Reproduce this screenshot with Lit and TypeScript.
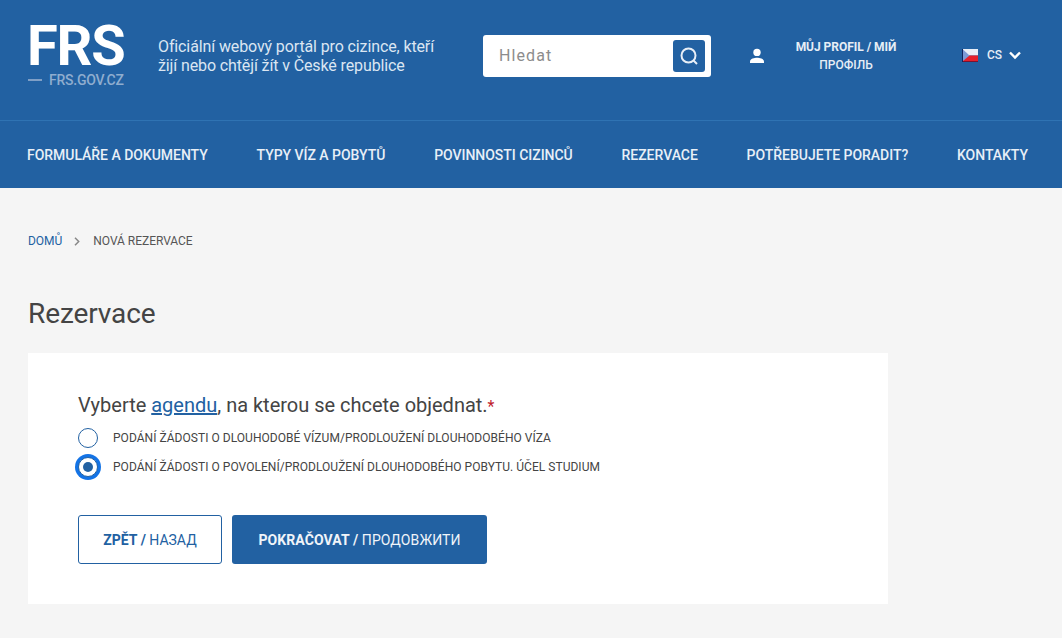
import { LitElement, html, css } from "lit";
import { customElement } from "lit/decorators.js";

@customElement("app-root")
export class AppRoot extends LitElement {
  static styles = css`
    :host { display: block; height: 638px; overflow: hidden; background: #f5f5f5; font-family: Roboto, "Liberation Sans", sans-serif; color: #3c3c3c; }
    .hdr { background: #2261a2; height: 188px; box-sizing: border-box; }
    .top { height: 121px; box-sizing: border-box; border-bottom: 1px solid #2f73b3; display: flex; align-items: flex-start; padding: 0 28px; }
    .logo { width: 97px; margin-top: 26px; flex: none; }
    .frs { font-size: 56px; line-height: 40px; height: 41px; font-weight: 700; color: #fff; letter-spacing: -1.2px; margin-left: -1px; }
    .dom { display: flex; align-items: center; gap: 7px; font-size: 14px; line-height: 16px; color: #8fadcf; margin-top: 5px; font-weight: 500; letter-spacing: -0.22px; }
    .dash { width: 14px; height: 2px; background: #7f9fc6; }
    .slogan { margin: 37px 0 0 33px; width: 300px; font-size: 16px; line-height: 19px; color: #dbe6f2; flex: none; padding-right: 10px; box-sizing: border-box; letter-spacing: -0.12px; }
    .search { margin: 35px 0 0 25px; width: 228px; height: 42px; box-sizing: border-box; background: #fff; border-radius: 3px; display: flex; align-items: center; justify-content: space-between; padding: 0 6px 0 16px; flex: none; }
    .ph { font-size: 16px; letter-spacing: 1.1px; color: #8c8c8c; margin-bottom: 2px; }
    .sbtn { width: 32px; height: 32px; background: #2261a2; border-radius: 3px; display: flex; align-items: center; justify-content: center; }
    .user { margin: 48px 0 0 38px; flex: none; display: block; }
    .prof { margin: 38px 0 0 26px; width: 110px; text-align: center; font-size: 12px; line-height: 18px; color: #e6eef6; flex: none; font-weight: 500; letter-spacing: -0.03px; }
    .prof b { font-weight: 700; display: block; }
    .lang { margin: 48px 0 0 61px; display: flex; align-items: center; flex: none; font-size: 12px; font-weight: 500; color: #e6eef6; }
    .lang svg.flag { margin-right: 9px; }
    .lang svg.chev { margin-left: 7px; }
    .nav { height: 67px; display: flex; justify-content: space-between; align-items: center; padding: 0 34px 4px 27px; font-size: 14px; font-weight: 500; color: #e8eff7; letter-spacing: -0.03px; }
    .crumbs { display: flex; align-items: center; padding: 46px 0 0 28px; font-size: 12px; line-height: 14px; color: #555; letter-spacing: -0.03px; }
    .crumbs a { color: #2261a2; }
    .crumbs svg { margin: 0 13px 0 12px; }
    h1 { font-size: 28px; line-height: 32px; font-weight: 400; margin: 50px 0 0 28px; color: #444; letter-spacing: -0.1px; }
    .card { margin: 23px 0 0 28px; width: 860px; height: 251px; box-sizing: border-box; background: #fff; padding: 40px 50px 0; }
    .q { font-size: 20px; line-height: 24px; color: #444; letter-spacing: -0.01px; }
    .q a { color: #2261a2; text-decoration: underline; }
    .q i { color: #c0202c; font-style: normal; font-size: 16px; }
    .opt { display: flex; align-items: center; height: 29px; font-size: 12px; color: #444; letter-spacing: 0.035px; }
    .opts { margin-top: 4px; }
    .dot { width: 20px; height: 20px; box-sizing: border-box; border: 1px solid #2261a2; border-radius: 50%; margin-right: 15px; flex: none; display: flex; align-items: center; justify-content: center; background: #fff; }
    .dot.on { box-shadow: 0 0 0 3px #1373e6; }
    .dot.on::after { content: ""; width: 10px; height: 10px; border-radius: 50%; background: #2261a2; }
    .btns { display: flex; gap: 10px; margin-top: 34px; }
    .btn { height: 49px; box-sizing: border-box; border-radius: 3px; display: flex; align-items: center; justify-content: center; font-size: 14px; }
    .btn b { font-weight: 700; white-space: pre; }
    .back { width: 144px; border: 1px solid #2261a2; color: #2261a2; }
    .next { width: 255px; background: #2261a2; color: #f0f4f9; letter-spacing: 0.1px; }
  `;

  render() {
    return html`
      <div class="hdr">
        <div class="top">
          <div class="logo">
            <div class="frs">FRS</div>
            <div class="dom"><span class="dash"></span>FRS.GOV.CZ</div>
          </div>
          <div class="slogan">Oficiální webový portál pro cizince, kteří žijí nebo chtějí žít v České republice</div>
          <div class="search">
            <span class="ph">Hledat</span>
            <span class="sbtn">
              <svg width="20" height="20" viewBox="0 0 20 20" fill="none" stroke="#e8eff7" stroke-width="2"><circle cx="9.500" cy="9.500" r="7"/><path d="M14.500 14.500 18 18"/></svg>
            </span>
          </div>
          <svg class="user" width="16" height="16" viewBox="0 0 16 16" fill="#fff"><circle cx="8" cy="4.400" r="3.700"/><path d="M1 15v-1.600C1 10.800 5.500 9.800 8 9.800s7 1 7 3.600V15z"/></svg>
          <div class="prof"><b>MŮJ PROFIL / MІЙ</b>ПРОФІЛЬ</div>
          <div class="lang">
            <svg class="flag" width="16" height="13" viewBox="0 0 16 13"><rect width="16" height="6.500" fill="#e9eef7"/><rect y="6.500" width="16" height="5.500" fill="#e5202c"/><rect y="12" width="16" height="1" fill="#7a1230"/><path d="M0 0h1v13H0z" fill="#12245e"/><path d="M1 .5 7.500 6.500 1 12z" fill="#7d9ad6"/></svg>
            CS
            <svg class="chev" width="12" height="9" viewBox="0 0 12 9" fill="none" stroke="#fff" stroke-width="2.400"><path d="M1 1.500 6 6.500 11 1.500"/></svg>
          </div>
        </div>
        <div class="nav">
          <span>FORMULÁŘE A DOKUMENTY</span>
          <span>TYPY VÍZ A POBYTŮ</span>
          <span>POVINNOSTI CIZINCŮ</span>
          <span>REZERVACE</span>
          <span>POTŘEBUJETE PORADIT?</span>
          <span>KONTAKTY</span>
        </div>
      </div>
      <div class="crumbs">
        <a>DOMŮ</a>
        <svg width="6" height="9" viewBox="0 0 6 9" fill="none" stroke="#888" stroke-width="1.500"><path d="M1 .8 4.700 4.500 1 8.200"/></svg>
        <span>NOVÁ REZERVACE</span>
      </div>
      <h1>Rezervace</h1>
      <div class="card">
        <div class="q">Vyberte <a>agendu</a>, na kterou se chcete objednat.<i>*</i></div>
        <div class="opts">
          <div class="opt"><span class="dot"></span>PODÁNÍ ŽÁDOSTI O DLOUHODOBÉ VÍZUM/PRODLOUŽENÍ DLOUHODOBÉHO VÍZA</div>
          <div class="opt"><span class="dot on"></span>PODÁNÍ ŽÁDOSTI O POVOLENÍ/PRODLOUŽENÍ DLOUHODOBÉHO POBYTU. ÚČEL STUDIUM</div>
        </div>
        <div class="btns">
          <div class="btn back"><b>ZPĚT / </b>НАЗАД</div>
          <div class="btn next"><b>POKRAČOVAT / </b>ПРОДОВЖИТИ</div>
        </div>
      </div>
    `;
  }
}
